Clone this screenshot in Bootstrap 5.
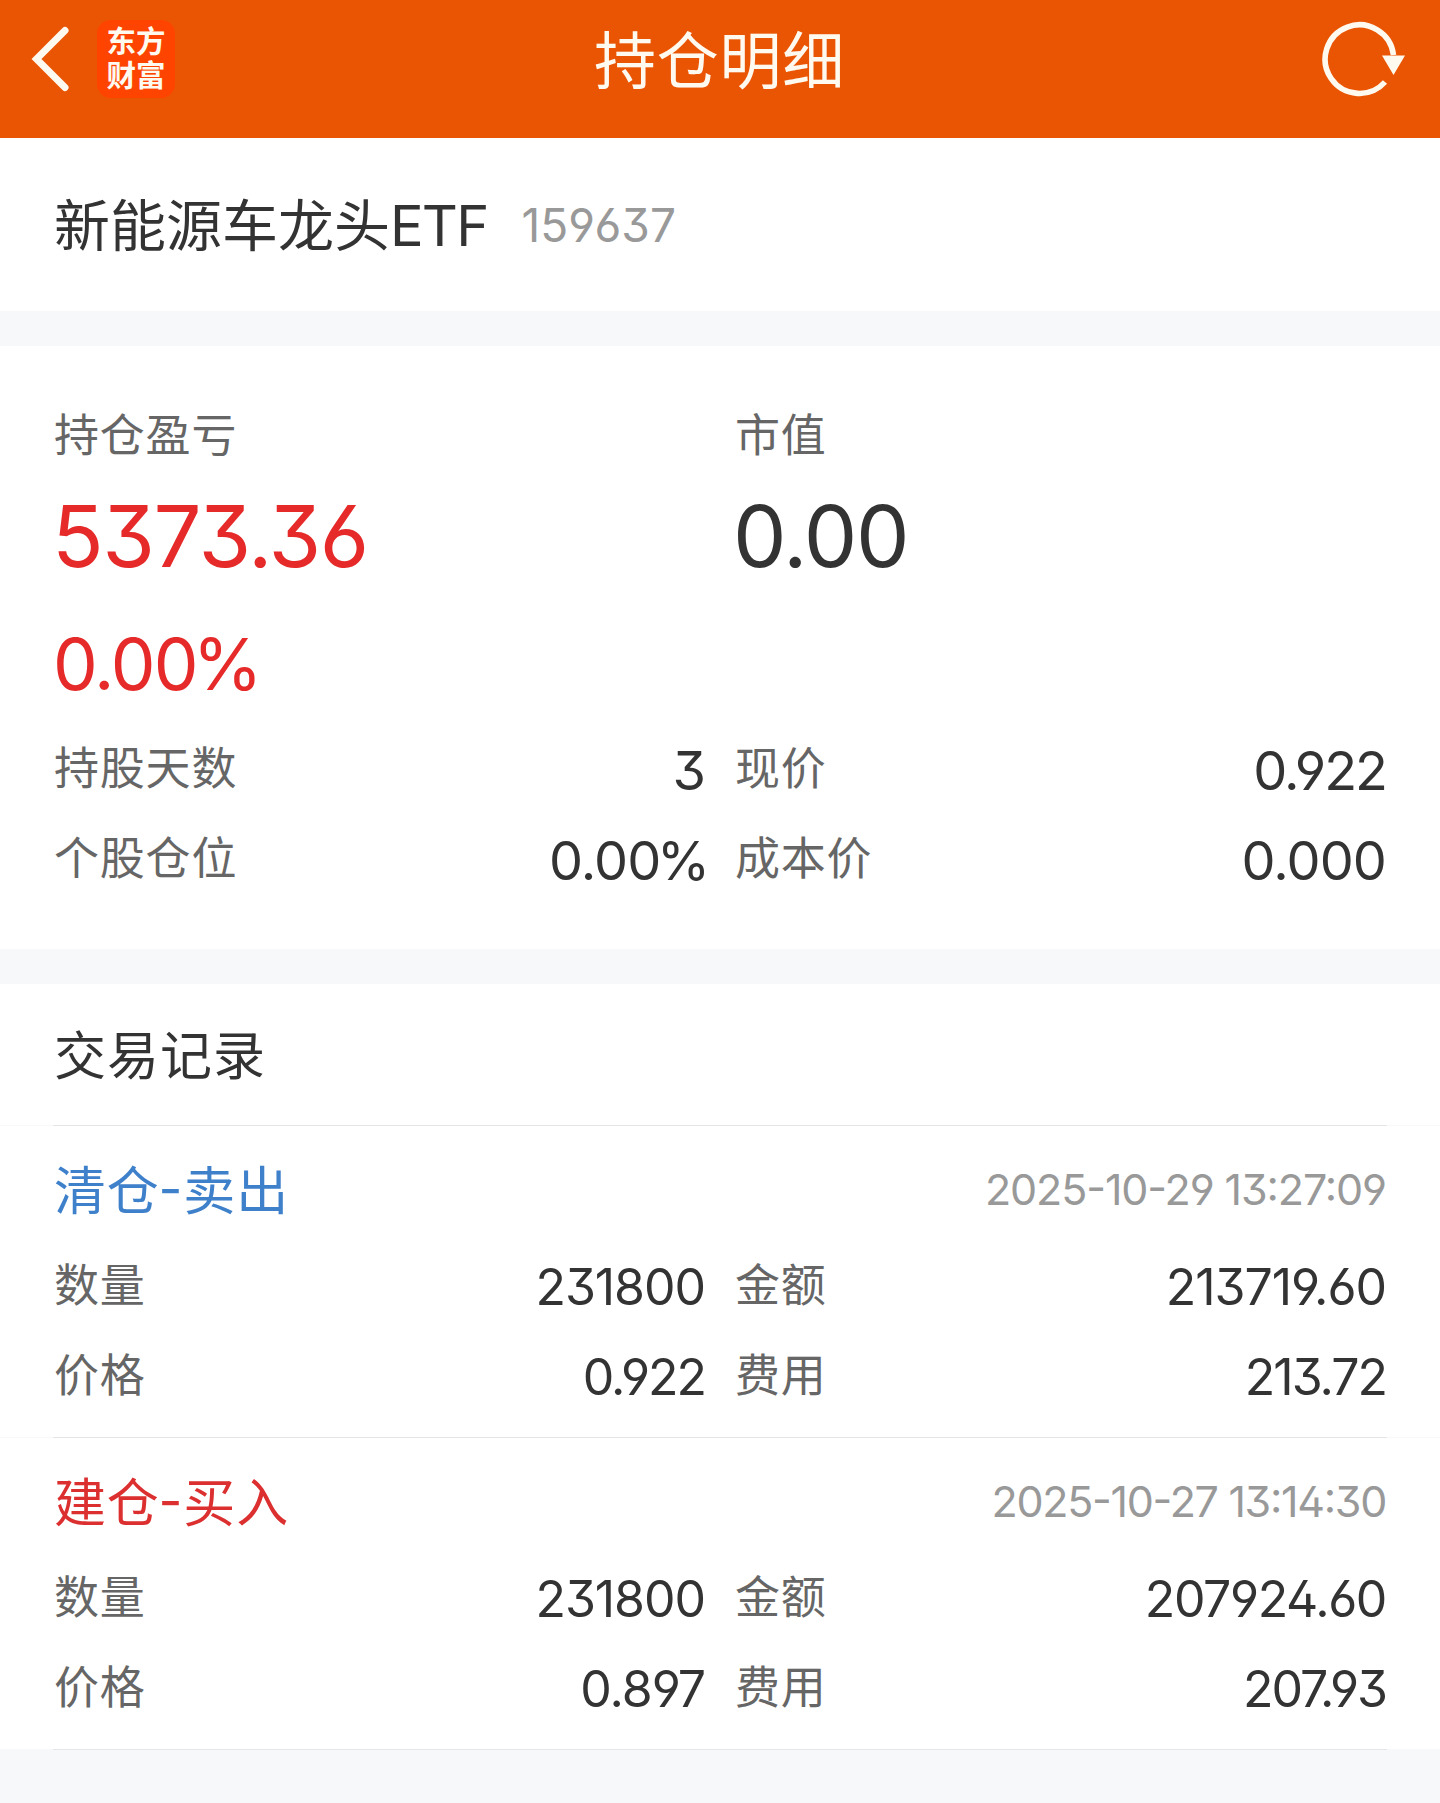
<!DOCTYPE html>
<html lang="zh-CN">
<head>
<meta charset="utf-8">
<meta name="viewport" content="width=device-width, initial-scale=1">
<title>持仓明细</title>
<link href="https://cdn.jsdelivr.net/npm/bootstrap@5.3.0/dist/css/bootstrap.min.css" rel="stylesheet">
<style>
body{font-family:Inter,"Noto Sans CJK SC",sans-serif;font-feature-settings:"ss01","cv09";background:#f7f8fa;color:#333;line-height:1;white-space:nowrap}
.topbar{height:138px;padding:0 35px 21px 31px;background:#ea5504;color:#fffaf0}
.side{flex:1 1 0}
.brand-tile{width:78px;height:78px;margin-left:28px;padding-bottom:2px;border-radius:14px;background:#ff4400;font-size:29.5px;line-height:34px;font-weight:700}
.page-title{font-size:62px;letter-spacing:.7px;padding:6px 0 0 3px}
.security{height:173px;padding:0 54px}
.sec-name{font-size:56px;padding-top:2px}
.sec-name span{letter-spacing:-1.8px}
.sec-code{font-size:46px;letter-spacing:.1px;color:#999;margin-left:34px}
.band{height:35px}
.summary{padding:44px 54px 43px}
.pair{display:grid;grid-template-columns:650px 650px;column-gap:31px;margin-right:-1px}
.caption-row{height:88px;padding-top:3px}
.key{font-size:45px;letter-spacing:.8px;color:#666}
.big{height:116px;font-size:85px;letter-spacing:-1.5px;margin-left:-2px}
.rate{height:132px;padding-top:8px;font-size:71px;letter-spacing:-.027em;margin-left:-1px}
.before-pct{letter-spacing:-.08em}
.up{color:#e62a2a}
.line-item{height:90px}
.line-item .key{padding-bottom:6px}
.num{font-size:54px;letter-spacing:-.9px;margin-right:-1px}
.num.snug{letter-spacing:-2px}
.num.pct{margin-right:-5px}
.heading{height:141px;padding:4px 54px 0;font-size:52px;letter-spacing:1px}
.trade{padding:1px 54px 15px;background:linear-gradient(#e5e5e5,#e5e5e5) 53px 0/1334px 1px no-repeat,linear-gradient(#f8f8f8,#f8f8f8) 0 0/100% 1px no-repeat,#fff}
.trade-head{height:116px;padding-top:10px}
.kind{font-size:52px;letter-spacing:.8px;padding-top:5px;font-feature-settings:"case"}
.kind span{margin:0 0 0 -1px}
.sell{color:#3f80cb}
.buy{color:#dc2f2f}
.stamp{font-size:43px;letter-spacing:-1.1px;color:#999;font-feature-settings:"ss01","cv09","case"}
.stamp.snug{letter-spacing:-1.3px}
.trade .line-item .key{padding-bottom:3px}
.trade .num{font-size:50px;letter-spacing:-1.05px}
.trade .num.mid{letter-spacing:-1.4px}
.trade .num.snug{letter-spacing:-2px}
.closing{height:53px;border-top:1px solid #e5e6e8;margin:0 53px}
</style>
</head>
<body>
<header class="topbar d-flex align-items-center">
  <div class="side d-flex align-items-center">
    <svg width="38" height="66" viewBox="0 0 38 66" fill="none" stroke="currentColor" stroke-width="7" stroke-linecap="round"><path d="M34 4.500 5.500 33 34 61.500"/></svg>
    <div class="brand-tile d-flex flex-column align-items-center justify-content-center"><div>东方</div><div>财富</div></div>
  </div>
  <div class="page-title">持仓明细</div>
  <div class="side d-flex justify-content-end">
    <svg width="84" height="76" viewBox="0 0 84 76"><path d="M72.500 34A34.300 34.300 0 1 0 64 61" fill="none" stroke="currentColor" stroke-width="5.600"/><path d="M61 34.500H84L72.500 54Z" fill="currentColor"/></svg>
  </div>
</header>

<section class="security bg-white d-flex align-items-center">
  <div class="sec-name">新能源车龙头<span>ETF</span></div>
  <div class="sec-code">159637</div>
</section>
<div class="band"></div>

<section class="summary bg-white">
  <div class="pair">
    <div>
      <div class="caption-row key d-flex align-items-center">持仓盈亏</div>
      <div class="big up d-flex align-items-center">5373.36</div>
      <div class="rate up d-flex align-items-center"><div>0.0<span class="before-pct">0</span>%</div></div>
    </div>
    <div>
      <div class="caption-row key d-flex align-items-center">市值</div>
      <div class="big d-flex align-items-center">0.00</div>
    </div>
  </div>
  <div class="pair">
    <div class="line-item d-flex align-items-center justify-content-between"><div class="key">持股天数</div><div class="num">3</div></div>
    <div class="line-item d-flex align-items-center justify-content-between"><div class="key">现价</div><div class="num snug">0.922</div></div>
    <div class="line-item d-flex align-items-center justify-content-between"><div class="key">个股仓位</div><div class="num pct">0.0<span class="before-pct">0</span>%</div></div>
    <div class="line-item d-flex align-items-center justify-content-between"><div class="key">成本价</div><div class="num">0.000</div></div>
  </div>
</section>
<div class="band"></div>

<section class="bg-white">
  <div class="heading d-flex align-items-center">交易记录</div>
  <article class="trade">
    <div class="trade-head d-flex align-items-center justify-content-between"><div class="kind sell">清仓<span>-</span>卖出</div><div class="stamp">2025-10-29 13:27:09</div></div>
    <div class="pair">
      <div class="line-item d-flex align-items-center justify-content-between"><div class="key">数量</div><div class="num">231800</div></div>
      <div class="line-item d-flex align-items-center justify-content-between"><div class="key">金额</div><div class="num">213719.60</div></div>
      <div class="line-item d-flex align-items-center justify-content-between"><div class="key">价格</div><div class="num snug">0.922</div></div>
      <div class="line-item d-flex align-items-center justify-content-between"><div class="key">费用</div><div class="num snug">213.72</div></div>
    </div>
  </article>
  <article class="trade">
    <div class="trade-head d-flex align-items-center justify-content-between"><div class="kind buy">建仓<span>-</span>买入</div><div class="stamp snug">2025-10-27 13:14:30</div></div>
    <div class="pair">
      <div class="line-item d-flex align-items-center justify-content-between"><div class="key">数量</div><div class="num">231800</div></div>
      <div class="line-item d-flex align-items-center justify-content-between"><div class="key">金额</div><div class="num mid">207924.60</div></div>
      <div class="line-item d-flex align-items-center justify-content-between"><div class="key">价格</div><div class="num">0.897</div></div>
      <div class="line-item d-flex align-items-center justify-content-between"><div class="key">费用</div><div class="num snug">207.93</div></div>
    </div>
  </article>
</section>
<div class="closing"></div>
<script src="https://cdn.jsdelivr.net/npm/bootstrap@5.3.0/dist/js/bootstrap.bundle.min.js"></script>
</body>
</html>
